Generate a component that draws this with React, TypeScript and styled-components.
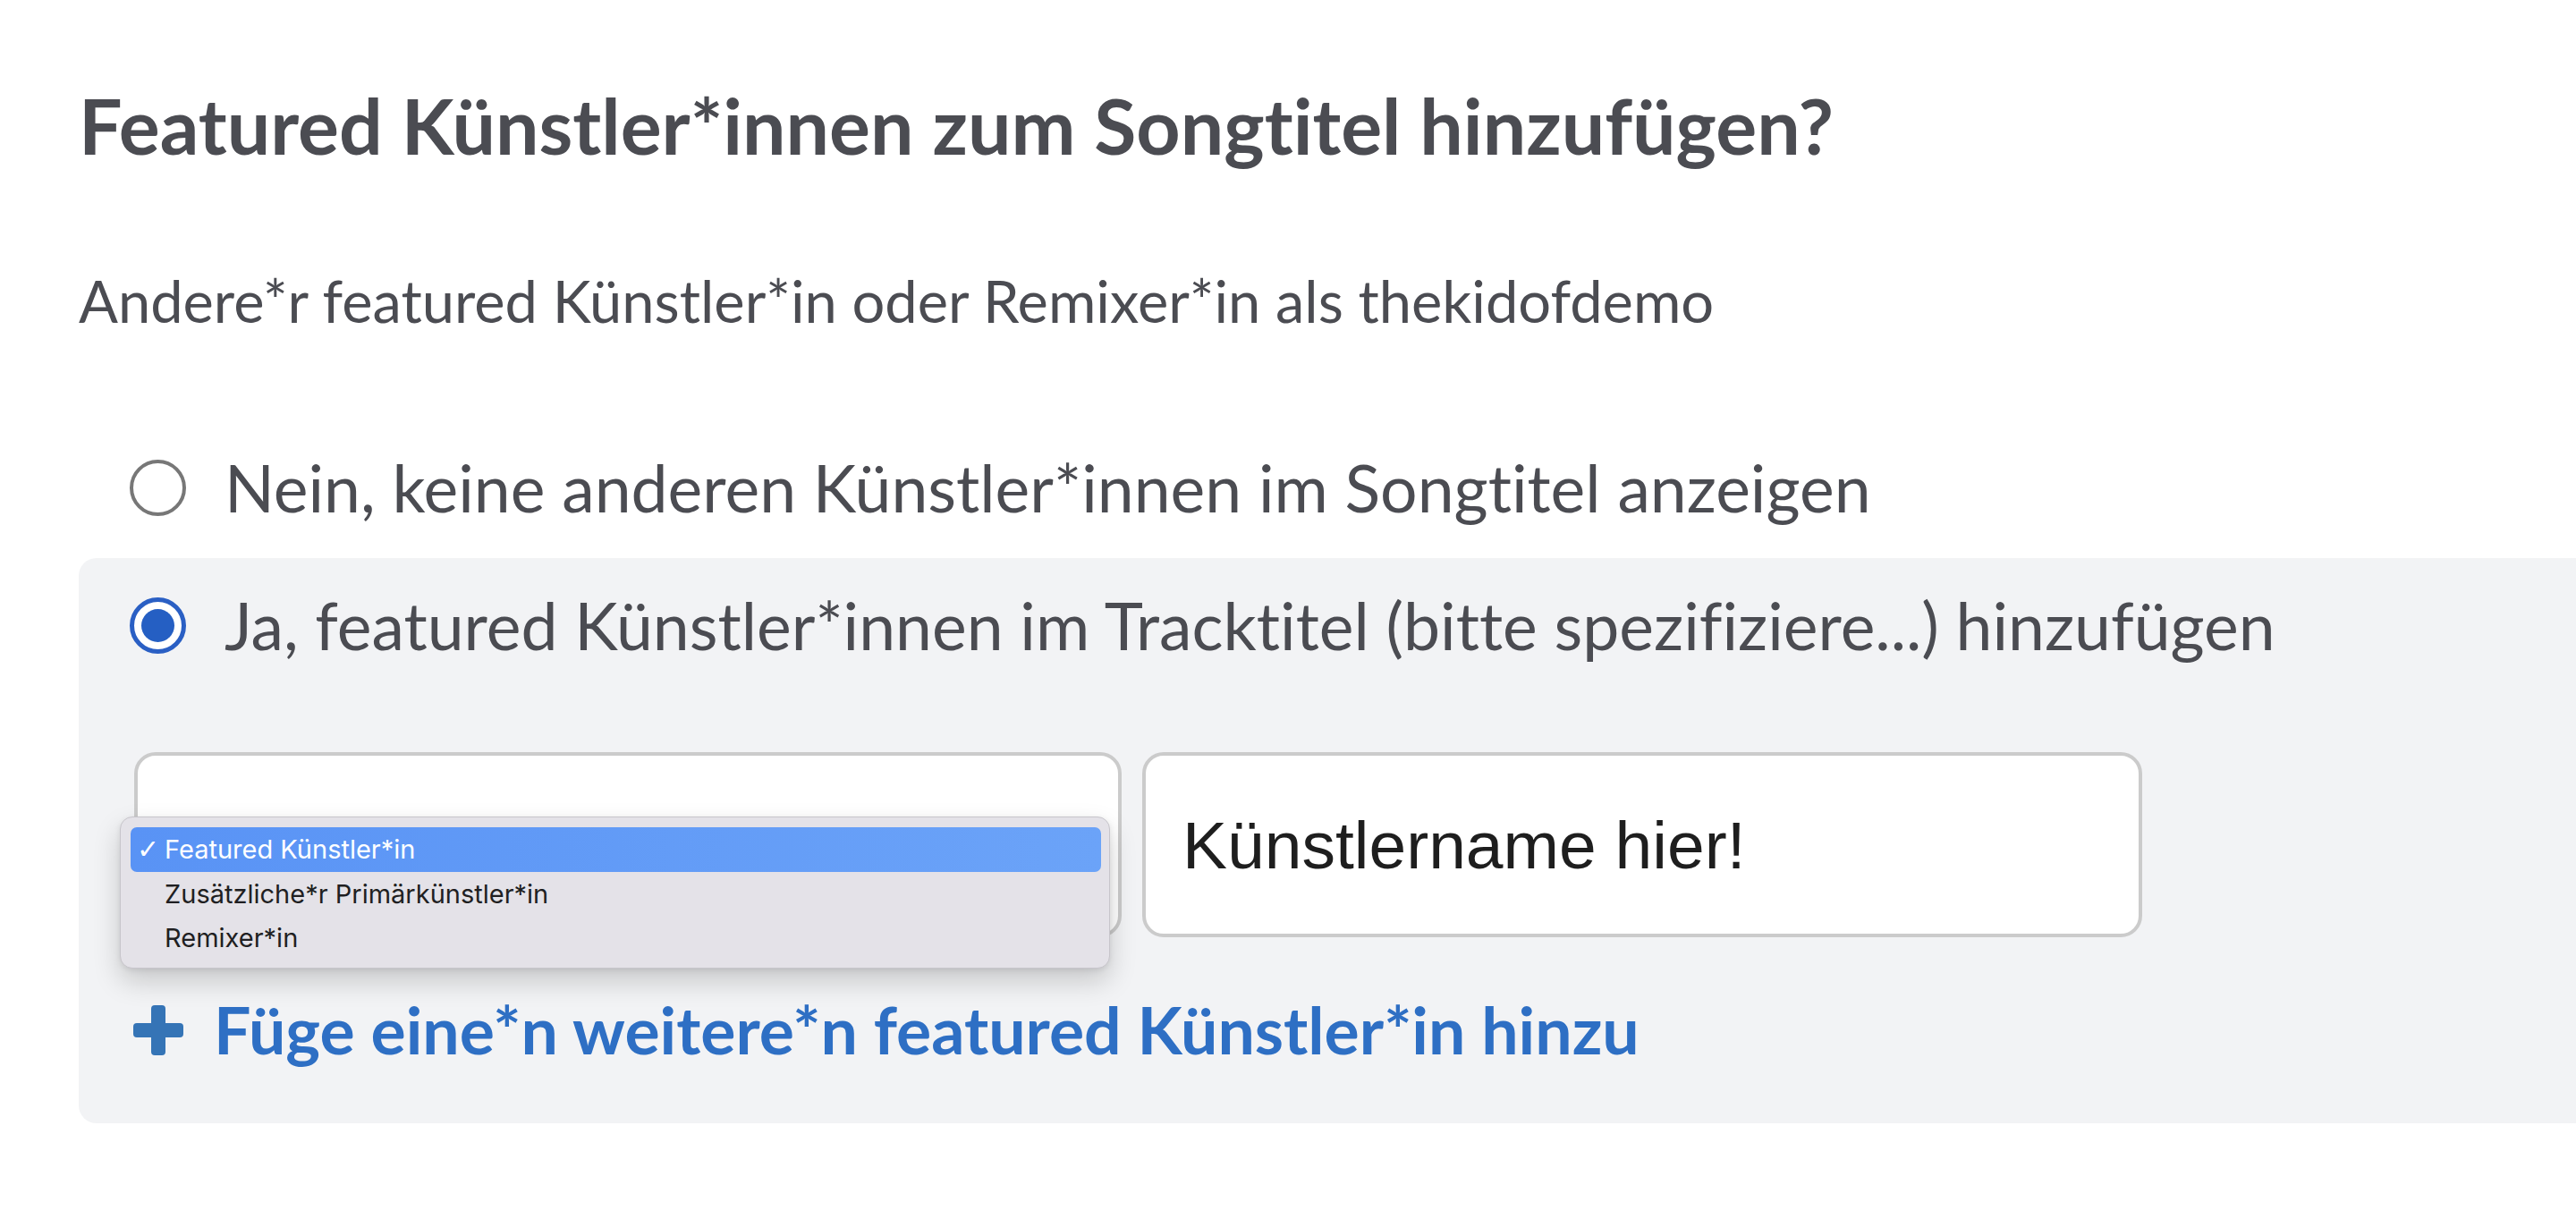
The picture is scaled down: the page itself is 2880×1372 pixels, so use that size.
import React from 'react';
import styled, { createGlobalStyle } from 'styled-components';

const GlobalStyle = createGlobalStyle`
  html, body { margin: 0; padding: 0; background: #ffffff; }
  body {
    font-family: Lato, "Noto Sans", sans-serif;
    font-variant-ligatures: no-common-ligatures;
  }
  * { box-sizing: border-box; }
`;

const Page = styled.div`
  padding: 88px 0 100px 88px;
  overflow: hidden;
`;

const Title = styled.h2`
  margin: 0;
  font-family: Lato, sans-serif;
  font-weight: 700;
  font-size: 86px;
  line-height: 1.2;
  color: #4b4c52;
`;

const Subtitle = styled.p`
  margin: 106px 0 0;
  font-family: Lato, sans-serif;
  font-weight: 400;
  font-size: 65px;
  line-height: 1.2;
  color: #4b4c52;
`;

const Options = styled.div`
  margin-top: 95px;
  display: flex;
  flex-direction: column;
`;

const Option = styled.div<{ $selected?: boolean }>`
  padding: 32px 0 ${p => (p.$selected ? '60px' : '36px')} 57px;
  background: ${p => (p.$selected ? '#f2f3f5' : 'transparent')};
  border-radius: ${p => (p.$selected ? '20px 0 0 20px' : '0')};
`;

const RadioRow = styled.label`
  display: flex;
  align-items: center;
  gap: 43px;
  cursor: pointer;
`;

const RadioCircle = styled.span<{ $checked?: boolean }>`
  flex: none;
  width: 63px;
  height: 63px;
  border-radius: 50%;
  background: #ffffff;
  border: ${p => (p.$checked ? '5px solid #2a5fc4' : '4px solid #777777')};
  display: flex;
  align-items: center;
  justify-content: center;
  &::after {
    content: '';
    display: ${p => (p.$checked ? 'block' : 'none')};
    width: 37px;
    height: 37px;
    border-radius: 50%;
    background: #255fc3;
  }
`;

const RadioLabel = styled.span`
  font-family: Lato, sans-serif;
  font-size: 73.3px;
  line-height: 86px;
  color: #4b4c52;
  white-space: nowrap;
`;

const FieldRow = styled.div`
  margin: 99px 0 0 5px;
  display: flex;
  gap: 23px;
`;

const SelectWrap = styled.div`
  position: relative;
  width: 1104px;
  height: 207px;
`;

const SelectBox = styled.div`
  width: 100%;
  height: 100%;
  background: #ffffff;
  border: 4px solid #cbcbcb;
  border-radius: 24px;
`;

const TextInput = styled.input`
  width: 1118px;
  height: 207px;
  background: #ffffff;
  border: 4px solid #cbcbcb;
  border-radius: 24px;
  padding: 0 0 0 41px;
  font-family: "Liberation Sans", Arial, sans-serif;
  font-size: 75px;
  color: #1e1e1e;
  outline: none;
`;

const Menu = styled.div`
  position: absolute;
  left: -16px;
  top: 72px;
  width: 1107px;
  height: 170px;
  padding: 11px 9px 11px 11px;
  background: #e4e2e8;
  border: 1px solid #c7c5cb;
  border-radius: 14px;
  box-shadow: 0 14px 30px rgba(0, 0, 0, 0.18), 0 2px 6px rgba(0, 0, 0, 0.08);
  z-index: 2;
`;

const MenuItem = styled.div<{ $active?: boolean }>`
  height: 49.5px;
  display: grid;
  grid-template-columns: 31px 1fr;
  align-items: center;
  padding-left: 7px;
  border-radius: 7px;
  font-family: Inter, "Liberation Sans", sans-serif;
  font-size: 29px;
  color: ${p => (p.$active ? '#ffffff' : '#1f1f22')};
  background: ${p => (p.$active ? 'linear-gradient(90deg, #5993f5 0%, #6ba3f8 100%)' : 'transparent')};
`;

const Check = styled.span`
  font-family: "DejaVu Sans", sans-serif;
  font-size: 30px;
`;

const AddLink = styled.a`
  margin: 59px 0 0 4px;
  display: flex;
  align-items: center;
  gap: 34px;
  text-decoration: none;
  font-family: Lato, sans-serif;
  font-weight: 700;
  font-size: 73.4px;
  line-height: 89px;
  color: #2e6fc4;
  white-space: nowrap;
  cursor: pointer;
`;

const PlusIcon = () => (
  <svg width="56" height="56" viewBox="0 0 56 56" aria-hidden="true">
    <rect x="20" y="0" width="16" height="56" rx="4" fill="#3574b6" />
    <rect x="0" y="20" width="56" height="16" rx="4" fill="#3574b6" />
  </svg>
);

export default function App() {
  return (
    <>
      <GlobalStyle />
      <Page>
        <Title>Featured Künstler*innen zum Songtitel hinzufügen?</Title>
        <Subtitle>Andere*r featured Künstler*in oder Remixer*in als thekidofdemo</Subtitle>
        <Options>
          <Option>
            <RadioRow>
              <RadioCircle />
              <RadioLabel>Nein, keine anderen Künstler*innen im Songtitel anzeigen</RadioLabel>
            </RadioRow>
          </Option>
          <Option $selected>
            <RadioRow>
              <RadioCircle $checked />
              <RadioLabel>Ja, featured Künstler*innen im Tracktitel (bitte spezifiziere...) hinzufügen</RadioLabel>
            </RadioRow>
            <FieldRow>
              <SelectWrap>
                <SelectBox />
                <Menu>
                  <MenuItem $active>
                    <Check>✓</Check>
                    <span>Featured Künstler*in</span>
                  </MenuItem>
                  <MenuItem>
                    <span />
                    <span>Zusätzliche*r Primärkünstler*in</span>
                  </MenuItem>
                  <MenuItem>
                    <span />
                    <span>Remixer*in</span>
                  </MenuItem>
                </Menu>
              </SelectWrap>
              <TextInput defaultValue="Künstlername hier!" />
            </FieldRow>
            <AddLink>
              <PlusIcon />
              <span>Füge eine*n weitere*n featured Künstler*in hinzu</span>
            </AddLink>
          </Option>
        </Options>
      </Page>
    </>
  );
}
